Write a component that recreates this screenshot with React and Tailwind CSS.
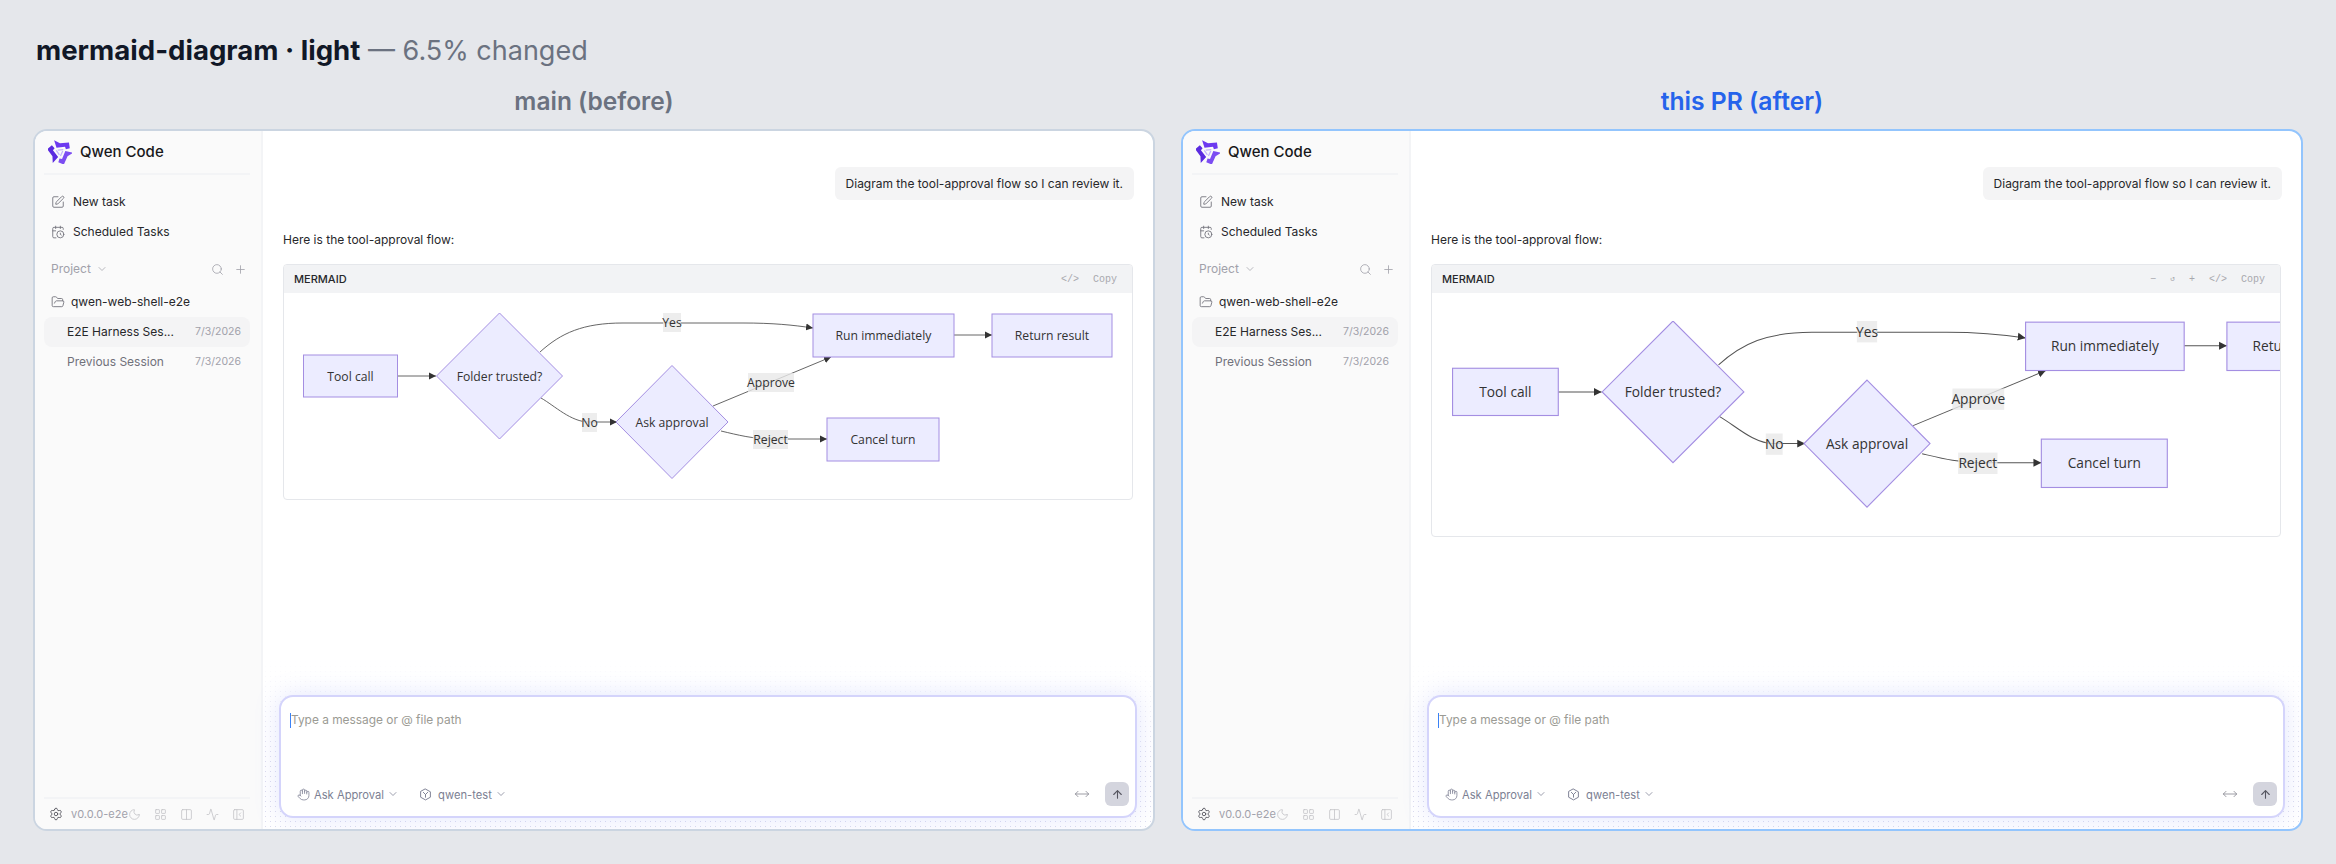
import React from "react";
import { SquarePen, CalendarClock, ChevronDown, Search, Plus, FolderOpen, Settings, Moon, LayoutGrid, Columns2, Activity, PanelLeftClose, Hand, ArrowUp, MoveHorizontal } from "lucide-react";

const Logo = () => (
  <svg width="24" height="24" viewBox="1 1 22 22" className="shrink-0">
    {[["#6d3af0", 0], ["#7c4df2", 120], ["#5b2be0", 240]].map(([c, r]) => (
      <g key={r} transform={`rotate(${r} 12 12)`}>
        <path d="M6.6 1.2 L12 4 L20.2 3.2 L21 8.6 L17.4 9.4 L16.6 7.2 L8.8 8.2 Z" fill={c} />
        <path d="M10 10.2 L15 9.8" stroke="#c4b5fd" strokeWidth="1.2" fill="none" />
      </g>
    ))}
  </svg>
);

const ModelIcon = () => (
  <svg width="13" height="13" viewBox="0 0 24 24" fill="none" stroke="currentColor" strokeWidth="1.8" strokeLinejoin="round" strokeLinecap="round" className="ml-[20px] shrink-0">
    <path d="M12 2 L21 7 V17 L12 22 L3 17 V7 Z" />
    <path d="M8 8 L12 12 L16 8 M12 12 V17" />
  </svg>
);

const Node = ({ x, y, w, h, label }) => (
  <g>
    <rect x={x} y={y} width={w} height={h} fill="#ECECFF" stroke="#a48ee2" strokeWidth="1" />
    <text x={x + w / 2} y={y + h / 2 + 4.5} textAnchor="middle" fontSize="12.2" fill="#333">{label}</text>
  </g>
);

const Diamond = ({ cx, cy, rx, ry, label }) => (
  <g>
    <polygon points={`${cx},${cy - ry} ${cx + rx},${cy} ${cx},${cy + ry} ${cx - rx},${cy}`} fill="#ECECFF" stroke="#a48ee2" strokeWidth="1" />
    <text x={cx} y={cy + 4.5} textAnchor="middle" fontSize="12.2" fill="#333">{label}</text>
  </g>
);

const EdgeLabel = ({ x, y, w, h, label }) => (
  <g>
    <rect x={x} y={y} width={w} height={h} fill="#e8e8e8" fillOpacity="0.8" />
    <text x={x + w / 2} y={y + h / 2 + 4.5} textAnchor="middle" fontSize="12.2" fill="#333">{label}</text>
  </g>
);

const Flow = ({ width, height }) => (
  <svg width={width} height={height} viewBox="0 0 810 168" className="shrink-0" style={{ fontFamily: '"Open Sans", sans-serif' }}>
    <defs>
      <marker id="arr" markerWidth="8" markerHeight="8" refX="7" refY="4" orient="auto" markerUnits="userSpaceOnUse">
        <path d="M0 0.5 L7 4 L0 7.5 Z" fill="#333" />
      </marker>
    </defs>
    <g fill="none" stroke="#555" strokeWidth="0.9">
      <path d="M94 63 L133 63" markerEnd="url(#arr)" />
      <path d="M237 39 C258 20 280 10 320 10 L440 10 C470 10 490 12 510 15" markerEnd="url(#arr)" />
      <path d="M651 22 L689 22" markerEnd="url(#arr)" />
      <path d="M238 85 C252 93 268 109 286 109 L314 109" markerEnd="url(#arr)" />
      <path d="M410 93 L528 44" markerEnd="url(#arr)" />
      <path d="M418 118 C435 122 450 126 470 126 L524 126" markerEnd="url(#arr)" />
    </g>
    <Node x={0.5} y={42} w={94} h={42} label="Tool call" />
    <Diamond cx={196.5} cy={63} rx={63} ry={63} label="Folder trusted?" />
    <Node x={510} y={1} w={141} h={43} label="Run immediately" />
    <Node x={689} y={1} w={120} h={43} label="Return result" />
    <Diamond cx={369} cy={109} rx={56} ry={56.5} label="Ask approval" />
    <Node x={524} y={105} w={112} h={43} label="Cancel turn" />
    <EdgeLabel x={360} y={0} w={18} h={19} label="Yes" />
    <EdgeLabel x={279} y={100} w={15} h={19} label="No" />
    <EdgeLabel x={445} y={60} w={46} h={19} label="Approve" />
    <EdgeLabel x={450} y={117} w={35} h={19} label="Reject" />
  </svg>
);

const FootIcon = ({ Icon }) => <Icon size={13} strokeWidth={1.5} />;

const Panel = ({ after }) => (
  <div className={`relative flex h-[702px] w-[1122px] overflow-hidden rounded-[14px] border-2 bg-white ${after ? "border-[#93c5fd]" : "border-[#cbd5e1]"}`}>
    <aside className="flex h-full w-[228px] shrink-0 flex-col border-r-2 border-[#f3f4f6] bg-[#fafafa] pl-[9px] pr-[11px]">
      <div className="flex h-[44px] items-center gap-[8px] border-b-2 border-[#f3f4f6] px-[4px]">
        <Logo />
        <span className="text-[15px] font-medium text-[#18181b]">Qwen Code</span>
      </div>
      <div className="mt-[12px] flex flex-col">
        <div className="flex h-[30px] items-center gap-[8px] px-[7px] text-[12px] text-[#27272a]">
          <SquarePen size={14} strokeWidth={1.5} className="text-[#71717a]" />New task
        </div>
        <div className="flex h-[30px] items-center gap-[8px] px-[7px] text-[12px] text-[#27272a]">
          <CalendarClock size={14} strokeWidth={1.5} className="text-[#71717a]" />Scheduled Tasks
        </div>
      </div>
      <div className="mt-[10px] flex h-[24px] items-center px-[7px] text-[12px] text-[#a1a1aa]">
        <span>Project</span>
        <ChevronDown size={12} strokeWidth={1.5} className="ml-[5px]" />
        <Search size={13} strokeWidth={1.5} className="ml-auto" />
        <Plus size={13} strokeWidth={1.5} className="ml-[10px] mr-[-4px]" />
      </div>
      <div className="mt-[6px] flex h-[30px] items-center gap-[6px] px-[7px] text-[12px] text-[#27272a]">
        <FolderOpen size={14} strokeWidth={1.5} className="text-[#71717a]" />qwen-web-shell-e2e
      </div>
      <div className="flex h-[30px] items-center justify-between rounded-[8px] bg-[#f4f4f5] pl-[23px] pr-[9px] text-[12px] text-[#27272a]">
        <span>E2E Harness Ses...</span><span className="text-[10.5px] text-[#a1a1aa]">7/3/2026</span>
      </div>
      <div className="flex h-[30px] items-center justify-between pl-[23px] pr-[9px] text-[12px] text-[#71717a]">
        <span>Previous Session</span><span className="text-[10.5px] text-[#a1a1aa]">7/3/2026</span>
      </div>
      <div className="mt-auto flex h-[32px] items-center border-t-2 border-[#f3f4f6] pl-[5px] text-[#a1a1aa]">
        <Settings size={14} strokeWidth={1.5} className="shrink-0 text-[#52525b]" />
        <span className="ml-[8px] w-[56px] whitespace-nowrap text-[11px]">v0.0.0-e2e</span>
        <div className="ml-[1px] flex items-center gap-[13px] text-[#c4c4c8]">
          <FootIcon Icon={Moon} /><FootIcon Icon={LayoutGrid} /><FootIcon Icon={Columns2} /><FootIcon Icon={Activity} /><FootIcon Icon={PanelLeftClose} />
        </div>
      </div>
    </aside>
    <main className="relative flex min-w-0 flex-1 flex-col">
      <div className="absolute bottom-0 left-0 right-0 h-[170px] bg-[radial-gradient(#dcdcef_0.7px,transparent_0.8px)] bg-[length:5px_5px] [mask-image:linear-gradient(to_bottom,transparent,black_60%)]" />
      <div className="relative flex min-h-0 flex-1 flex-col px-[20px] pt-[36px]">
        <div className="mr-[-1px] self-end rounded-[6px] bg-[#f4f4f5] px-[11px] py-[8px] text-[12px] leading-[17px] text-[#27272a]">
          Diagram the tool-approval flow so I can review it.
        </div>
        <p className="mt-[30px] text-[12px] leading-[20px] text-[#27272a]">Here is the tool-approval flow:</p>
        <div className="mt-[14px] overflow-hidden rounded-[4px] border border-[#e5e7eb]">
          <div className="flex h-[28px] items-center justify-between bg-[#f2f3f5] pl-[10px] pr-[15px]">
            <span className="text-[11px] font-medium text-[#27272a]">MERMAID</span>
            <div className="flex items-center gap-[14px] font-['Liberation_Mono',monospace] text-[10px] text-[#a8a8ae]">
              {after && (<><span>−</span><span className="text-[8px]">↺</span><span>+</span></>)}
              <span>&lt;/&gt;</span><span>Copy</span>
            </div>
          </div>
          {after ? (
            <div className="flex h-[243px] overflow-hidden pl-[20px] pt-[28px]"><Flow width={911} height={189} /></div>
          ) : (
            <div className="flex h-[206px] overflow-hidden pl-[19px] pt-[20px]"><Flow width={810} height={168} /></div>
          )}
        </div>
      </div>
      <div className="relative mx-[16px] mb-[11px] flex h-[123px] shrink-0 flex-col rounded-[14px] border-2 border-[#d4d4fb] bg-white pl-[9px] pr-[6px] shadow-[0_0_24px_rgba(129,140,248,0.22)]">
        <div className="mt-[13px] flex h-[20px] items-center text-[11.9px] text-[#9b9b94]">
          <span className="h-[15px] w-px bg-[#3b82f6]" />Type a message or @ file path
        </div>
        <div className="mb-[10px] mt-auto flex items-center text-[#7c7f93]">
          <Hand size={13} strokeWidth={1.5} className="ml-[7px]" />
          <span className="ml-[4px] mt-[2px] text-[11.2px]">Ask Approval</span>
          <ChevronDown size={12} strokeWidth={1.5} className="ml-[3px]" />
          <ModelIcon />
          <span className="ml-[6px] mt-[2px] text-[11.2px]">qwen-test</span>
          <ChevronDown size={12} strokeWidth={1.5} className="ml-[3px]" />
          <MoveHorizontal size={16} strokeWidth={1.25} className="ml-auto mr-[15px] text-[#8a8a94]" />
          <div className="flex h-[24px] w-[24px] items-center justify-center rounded-[6px] bg-[#d4d5de] text-[#55555f]">
            <ArrowUp size={13} strokeWidth={2} />
          </div>
        </div>
      </div>
    </main>
  </div>
);

export default function App() {
  return (
    <div className="h-[864px] w-[2336px] overflow-hidden bg-[#e5e7eb] px-[33px] font-['Inter',sans-serif]">
      <h1 className="h-[68px] pl-[3px] pt-[32px] text-[27px] leading-[36px] text-[#6b7280]">
        <span className="text-[27.6px] font-bold text-[#111827]">mermaid-diagram · light</span> — 6.5% changed
      </h1>
      <div className="mt-[19px] flex gap-[26px]">
        <div className="flex w-[1122px] flex-col">
          <div className="mb-[14px] text-center text-[24.5px] font-semibold leading-[28px] text-[#6b7280]">main (before)</div>
          <Panel />
        </div>
        <div className="flex w-[1122px] flex-col">
          <div className="mb-[14px] text-center text-[24.7px] font-semibold leading-[28px] text-[#2563eb]">this PR (after)</div>
          <Panel after />
        </div>
      </div>
    </div>
  );
}
